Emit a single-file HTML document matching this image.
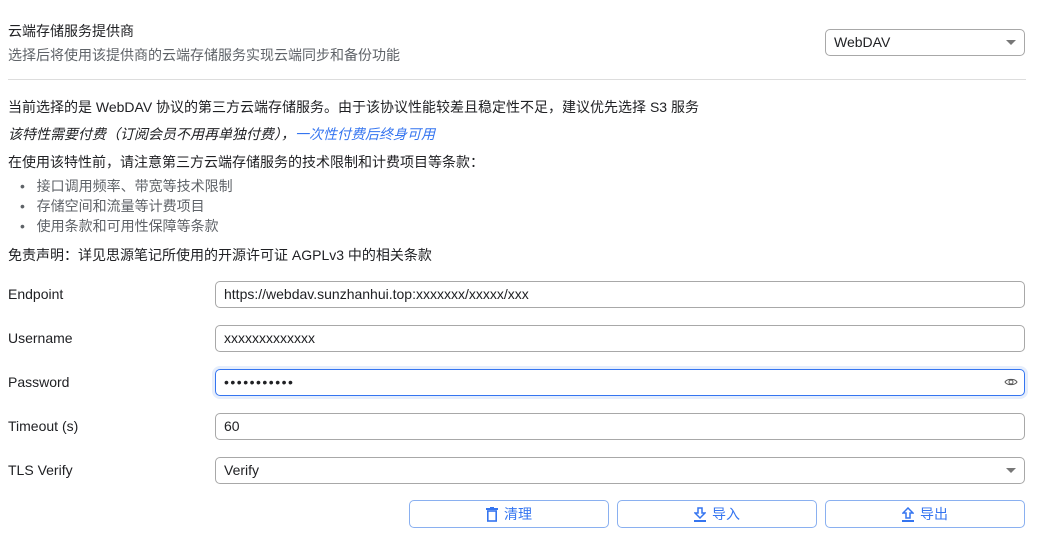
<!DOCTYPE html>
<html><head><meta charset="utf-8"><style>
*{box-sizing:border-box;margin:0;padding:0}
body{width:1046px;height:538px;background:#fff;font-family:"Liberation Sans","Noto Sans CJK SC",sans-serif;font-size:14px;color:#202124;position:relative;overflow:hidden}
.a{position:absolute;white-space:nowrap}
.gray{color:#5f6368}
.inp{position:absolute;left:215px;width:810px;height:27px;border:1px solid #a8a8a8;border-radius:5px;padding-left:8px;line-height:25px;font-size:14px}
.btn{position:absolute;top:500px;width:200px;height:28px;border:1px solid #8ab0f0;border-radius:5px;color:#3575f0;text-align:center;line-height:26px;font-size:14px}
.btn svg{vertical-align:-3px;margin-right:6px}
.caret{position:absolute;right:8px;top:10px;width:0;height:0;border-left:5px solid transparent;border-right:5px solid transparent;border-top:5px solid #777}
</style></head><body>
<div class="a" style="left:8px;top:21px">云端存储服务提供商</div>
<div class="a gray" style="left:8px;top:45px">选择后将使用该提供商的云端存储服务实现云端同步和备份功能</div>
<div class="inp" style="left:825px;width:200px;top:29px">WebDAV<span class="caret"></span></div>
<div class="a" style="left:8px;top:79px;width:1018px;height:1px;background:#ddd"></div>
<div class="a" style="left:8px;top:97px">当前选择的是 WebDAV 协议的第三方云端存储服务。由于该协议性能较差且稳定性不足，建议优先选择 S3 服务</div>
<div class="a" style="left:8px;top:124px;font-style:italic">该特性需要付费（订阅会员不用再单独付费），<span style="color:#3575f0">一次性付费后终身可用</span></div>
<div class="a" style="left:8px;top:152px">在使用该特性前，请注意第三方云端存储服务的技术限制和计费项目等条款：</div>
<div class="a gray" style="left:20px;top:176px;line-height:20px">
<div>•&nbsp;&nbsp;&nbsp;接口调用频率、带宽等技术限制</div>
<div>•&nbsp;&nbsp;&nbsp;存储空间和流量等计费项目</div>
<div>•&nbsp;&nbsp;&nbsp;使用条款和可用性保障等条款</div></div>
<div class="a" style="left:8px;top:245px">免责声明：详见思源笔记所使用的开源许可证 AGPLv3 中的相关条款</div>
<div class="a" style="left:8px;top:286px">Endpoint</div>
<div class="inp" style="top:281px">https://webdav.sunzhanhui.top:xxxxxxx/xxxxx/xxx</div>
<div class="a" style="left:8px;top:330px">Username</div>
<div class="inp" style="top:325px">xxxxxxxxxxxxx</div>
<div class="a" style="left:8px;top:374px">Password</div>
<div class="inp" style="top:369px;border-color:#3575f0;box-shadow:0 0 0 3px #e6eefc;letter-spacing:1.5px">•••••••••••
<svg style="position:absolute;right:6px;top:6px" width="14" height="12" viewBox="0 0 14 12"><path d="M1 6C3 2.5 11 2.5 13 6C11 9.5 3 9.5 1 6Z" fill="none" stroke="#555" stroke-width="1"/><circle cx="7" cy="6" r="2" fill="none" stroke="#555"/></svg></div>
<div class="a" style="left:8px;top:418px">Timeout (s)</div>
<div class="inp" style="top:413px">60</div>
<div class="a" style="left:8px;top:462px">TLS Verify</div>
<div class="inp" style="top:457px">Verify<span class="caret"></span></div>
<div class="btn" style="left:409px"><svg width="12" height="15" viewBox="0 0 12 15"><rect x="0" y="1" width="12" height="2" fill="#3575f0"/><rect x="4" y="0" width="4" height="2" fill="#3575f0"/><rect x="1.8" y="4" width="8.4" height="10" fill="none" stroke="#3575f0" stroke-width="1.6"/></svg>清理</div>
<div class="btn" style="left:617px"><svg width="12" height="15" viewBox="0 0 12 15"><path d="M4 1H8V6H11L6 11L1 6H4Z" fill="none" stroke="#3575f0" stroke-width="1.5"/><rect x="0" y="13" width="12" height="2" fill="#3575f0"/></svg>导入</div>
<div class="btn" style="left:825px"><svg width="12" height="15" viewBox="0 0 12 15"><path d="M4 11H8V6H11L6 1L1 6H4Z" fill="none" stroke="#3575f0" stroke-width="1.5"/><rect x="0" y="13" width="12" height="2" fill="#3575f0"/></svg>导出</div>
</body></html>
